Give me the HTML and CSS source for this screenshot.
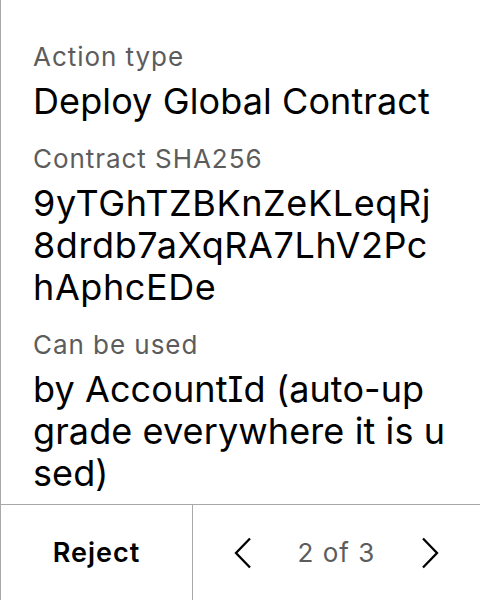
FILE: index.html
```html
<!DOCTYPE html>
<html>
<head>
<meta charset="utf-8">
<link rel="stylesheet" href="styles.css">
</head>
<body>
<div class="screen">
  <div class="content">
    <div class="field">
      <div class="label">Action type</div>
      <div class="value">Deploy Global Contract</div>
    </div>
    <div class="field">
      <div class="label">Contract SHA256</div>
      <div class="value hash">9yTGhTZBKnZeKLeqRj8drdb7aXqRA7LhV2PchAphcEDe</div>
    </div>
    <div class="field">
      <div class="label">Can be used</div>
      <div class="value">by AccountId (auto-upgrade everywhere it is used)</div>
    </div>
  </div>
  <div class="footer">
    <div class="reject">Reject</div>
    <div class="pager">
      <svg class="chev" width="18" height="32" viewBox="0 0 18 32"><path d="M16 1.5 L2 16 L16 30.5" fill="none" stroke="#000" stroke-width="2.3"/></svg>
      <span class="count">2 of 3</span>
      <svg class="chev" width="18" height="32" viewBox="0 0 18 32"><path d="M2 1.5 L16 16 L2 30.5" fill="none" stroke="#000" stroke-width="2.3"/></svg>
    </div>
  </div>
</div>
</body>
</html>
```
FILE: styles.css
```css
html, body {
  margin: 0;
  padding: 0;
  background: #fff;
}
body {
  font-family: Inter, "Noto Sans", sans-serif;
  font-feature-settings: "cv08";
  color: #000;
}
.screen {
  width: 479px;
  height: 600px;
  border-left: 1px solid #a8a8a8;
  display: flex;
  flex-direction: column;
}
.content {
  flex: 1;
  padding: 39px 34.5px 0 32px;
  display: flex;
  flex-direction: column;
  gap: 19px;
}
.label {
  font-size: 26px;
  line-height: 36px;
  letter-spacing: 0.95px;
  color: #5c5c5c;
  margin-bottom: 5px;
}
.value {
  font-size: 36px;
  line-height: 42px;
  letter-spacing: 0.1px;
  word-break: break-all;
}
.hash {
  letter-spacing: 0.6px;
}
.footer {
  height: 95px;
  border-top: 1px solid #a8a8a8;
  display: flex;
}
.reject {
  width: 191px;
  border-right: 1px solid #a8a8a8;
  display: flex;
  align-items: center;
  justify-content: center;
  font-size: 27px;
  letter-spacing: 1px;
  font-weight: 600;
}
.pager {
  flex: 1;
  display: flex;
  align-items: center;
  justify-content: center;
  gap: 46px;
}
.count {
  font-size: 26px;
  letter-spacing: 1px;
  color: #5c5c5c;
}
```
